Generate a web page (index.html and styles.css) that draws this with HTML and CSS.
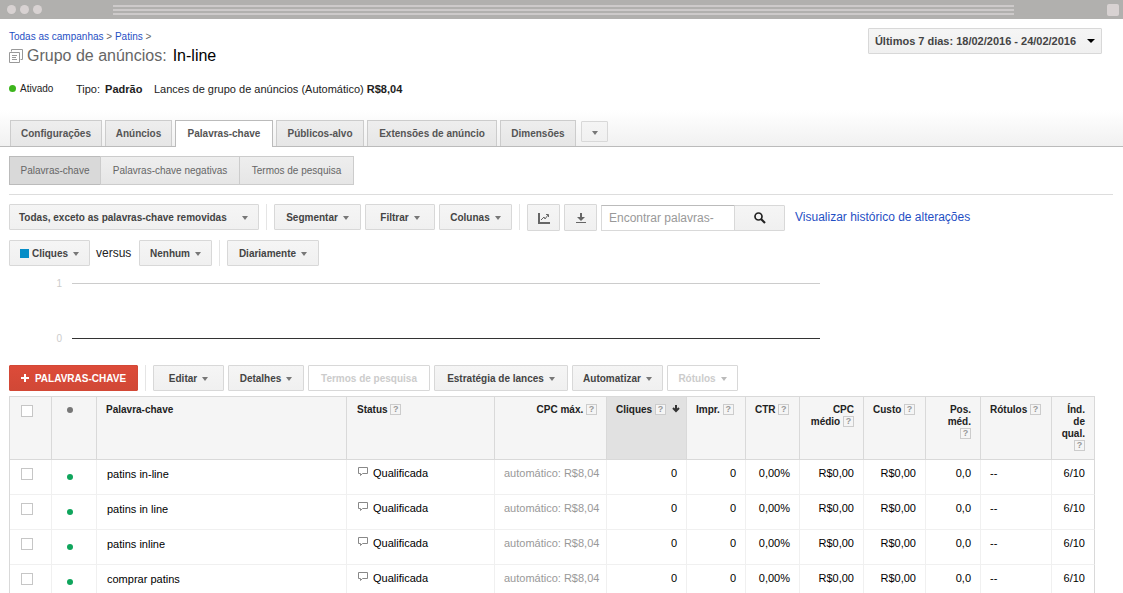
FILE: index.html
```html
<!DOCTYPE html>
<html lang="pt-BR">
<head>
    <meta charset="UTF-8">
    <meta name="viewport" content="width=device-width, initial-scale=1.0">
    <title>Grupo de anúncios: In-line</title>
    <link rel="stylesheet" href="styles.css">
</head>
<body>
    <div class="window-bar">
        <div class="window-dots"><i></i><i></i><i></i></div>
        <div class="window-lines"><i></i><i></i><i></i></div>
        <div class="window-box"></div>
    </div>

    <main class="content">
        <header class="page-header">
            <div>
                <nav class="breadcrumb"><a href="#">Todas as campanhas</a> &gt; <a href="#">Patins</a> &gt;</nav>
                <h1>
                    <svg width="14" height="14" viewBox="0 0 14 14" fill="none" stroke="#999">
                        <path d="M2.5 2.5V.5h11v10h-2M.5 3.5h10v10H.5z"/>
                        <path d="M3 6.5h5M3 8.5h4M3 10.5h5"/>
                    </svg>
                    <span>Grupo de anúncios:</span> <b>In-line</b>
                </h1>
                <div class="group-info">
                    <span class="dot enabled"></span>
                    <span class="state">Ativado</span>
                    <span class="type">Tipo: <strong>Padrão</strong></span>
                    <span>Lances de grupo de anúncios (Automático) <strong>R$8,04</strong></span>
                </div>
            </div>
            <button class="btn date-btn">Últimos 7 dias: 18/02/2016 - 24/02/2016 <i class="caret"></i></button>
        </header>

        <nav class="tabs">
            <a href="#" class="tab w-92">Configurações</a>
            <a href="#" class="tab w-67">Anúncios</a>
            <a href="#" class="tab w-98 active">Palavras-chave</a>
            <a href="#" class="tab w-88">Públicos-alvo</a>
            <a href="#" class="tab w-130">Extensões de anúncio</a>
            <a href="#" class="tab w-76">Dimensões</a>
            <button class="btn more-tabs" aria-label="Mais guias"><i class="caret"></i></button>
        </nav>

        <nav class="subtabs">
            <a href="#" class="w-92 active">Palavras-chave</a>
            <a href="#" class="w-140">Palavras-chave negativas</a>
            <a href="#" class="w-115">Termos de pesquisa</a>
        </nav>

        <div class="toolbar filters">
            <button class="btn filter-all">Todas, exceto as palavras-chave removidas <i class="caret"></i></button>
            <span class="divider"></span>
            <button class="btn w-87">Segmentar <i class="caret"></i></button>
            <button class="btn w-70">Filtrar <i class="caret"></i></button>
            <button class="btn w-73">Colunas <i class="caret"></i></button>
            <span class="divider"></span>
            <button class="btn icon-btn" aria-label="Gráfico">
                <svg width="12" height="12" viewBox="0 0 12 12" fill="none" stroke="#666">
                    <path d="M1 1v10h11" stroke-width="2"/>
                    <path d="M3 8l3-3 1 2 3-4M8 2.5h2.500V5"/>
                </svg>
            </button>
            <button class="btn icon-btn" aria-label="Download">
                <svg width="10" height="12" viewBox="0 0 10 12" fill="#666">
                    <path d="M4 1h2v4h3L5 9 1 5h3zM0 10h10v1H0z"/>
                </svg>
            </button>
            <form class="search">
                <input type="text" placeholder="Encontrar palavras-" aria-label="Encontrar palavras-chave">
                <button class="btn search-btn" type="button" aria-label="Pesquisar">
                    <svg width="12" height="12" viewBox="0 0 12 12" fill="none" stroke="#222">
                        <circle cx="4.5" cy="4.5" r="3.5" stroke-width="1.7"/>
                        <path d="M7 7l4 4" stroke-width="2.2"/>
                    </svg>
                </button>
            </form>
            <a href="#" class="history-link">Visualizar histórico de alterações</a>
        </div>

        <div class="toolbar metrics">
            <button class="btn w-81"><i class="swatch"></i>Cliques <i class="caret"></i></button>
            <span class="versus">versus</span>
            <button class="btn w-73">Nenhum <i class="caret"></i></button>
            <span class="divider"></span>
            <button class="btn w-92">Diariamente <i class="caret"></i></button>
        </div>

        <div class="chart">
            <div class="grid-line"><span>1</span><i></i></div>
            <div class="grid-line base"><span>0</span><i></i></div>
        </div>

        <div class="toolbar actions">
            <button class="btn primary w-129">
                <svg width="8" height="8" viewBox="0 0 8 8" fill="#fff"><path d="M3 0h2v3h3v2H5v3H3V5H0V3h3z"/></svg>
                PALAVRAS-CHAVE
            </button>
            <span class="divider"></span>
            <button class="btn w-71">Editar <i class="caret"></i></button>
            <button class="btn w-76">Detalhes <i class="caret"></i></button>
            <button class="btn w-122" disabled>Termos de pesquisa</button>
            <button class="btn w-134">Estratégia de lances <i class="caret"></i></button>
            <button class="btn w-91">Automatizar <i class="caret"></i></button>
            <button class="btn w-71" disabled>Rótulos <i class="caret"></i></button>
        </div>

        <div class="table-wrap">
            <table>
                <colgroup>
                    <col class="w-42"><col class="w-45"><col><col class="w-148"><col class="w-112">
                    <col class="w-80"><col class="w-59"><col class="w-54"><col class="w-64"><col class="w-62">
                    <col class="w-55"><col class="w-71"><col class="w-43">
                </colgroup>
                <thead>
                    <tr>
                        <th class="check"><input type="checkbox" aria-label="Selecionar tudo"></th>
                        <th class="mark"><span class="dot"></span></th>
                        <th>Palavra-chave</th>
                        <th class="status">Status <button class="help">?</button></th>
                        <th class="num">CPC máx. <button class="help">?</button></th>
                        <th class="sorted">Cliques <button class="help">?</button>
                            <svg width="8" height="8" viewBox="0 0 8 8" fill="none" stroke="#333" stroke-width="2"><path d="M4 0v6M1 3l3 3 3-3"/></svg>
                        </th>
                        <th>Impr. <button class="help">?</button></th>
                        <th>CTR <button class="help">?</button></th>
                        <th class="num">CPC<br>médio <button class="help">?</button></th>
                        <th>Custo <button class="help">?</button></th>
                        <th class="num">Pos.<br>méd.<br><button class="help">?</button></th>
                        <th>Rótulos <button class="help">?</button></th>
                        <th class="num">Índ.<br>de<br>qual.<br><button class="help">?</button></th>
                    </tr>
                </thead>
                <tbody>
                    <tr>
                        <td class="check"><input type="checkbox" aria-label="patins in-line"></td>
                        <td class="mark"><span class="dot"></span></td>
                        <td class="keyword">patins in-line</td>
                        <td class="status"><svg width="11" height="10" viewBox="0 0 11 10" fill="none" stroke="#888"><path d="M.5.5h9v6h-5l-2 2v-2h-2z"/></svg>Qualificada</td>
                        <td class="num auto">automático: R$8,04</td>
                        <td class="num">0</td>
                        <td class="num">0</td>
                        <td class="num">0,00%</td>
                        <td class="num">R$0,00</td>
                        <td class="num">R$0,00</td>
                        <td class="num">0,0</td>
                        <td>--</td>
                        <td class="num">6/10</td>
                    </tr>
                    <tr>
                        <td class="check"><input type="checkbox" aria-label="patins in line"></td>
                        <td class="mark"><span class="dot"></span></td>
                        <td class="keyword">patins in line</td>
                        <td class="status"><svg width="11" height="10" viewBox="0 0 11 10" fill="none" stroke="#888"><path d="M.5.5h9v6h-5l-2 2v-2h-2z"/></svg>Qualificada</td>
                        <td class="num auto">automático: R$8,04</td>
                        <td class="num">0</td>
                        <td class="num">0</td>
                        <td class="num">0,00%</td>
                        <td class="num">R$0,00</td>
                        <td class="num">R$0,00</td>
                        <td class="num">0,0</td>
                        <td>--</td>
                        <td class="num">6/10</td>
                    </tr>
                    <tr>
                        <td class="check"><input type="checkbox" aria-label="patins inline"></td>
                        <td class="mark"><span class="dot"></span></td>
                        <td class="keyword">patins inline</td>
                        <td class="status"><svg width="11" height="10" viewBox="0 0 11 10" fill="none" stroke="#888"><path d="M.5.5h9v6h-5l-2 2v-2h-2z"/></svg>Qualificada</td>
                        <td class="num auto">automático: R$8,04</td>
                        <td class="num">0</td>
                        <td class="num">0</td>
                        <td class="num">0,00%</td>
                        <td class="num">R$0,00</td>
                        <td class="num">R$0,00</td>
                        <td class="num">0,0</td>
                        <td>--</td>
                        <td class="num">6/10</td>
                    </tr>
                    <tr>
                        <td class="check"><input type="checkbox" aria-label="comprar patins"></td>
                        <td class="mark"><span class="dot"></span></td>
                        <td class="keyword">comprar patins</td>
                        <td class="status"><svg width="11" height="10" viewBox="0 0 11 10" fill="none" stroke="#888"><path d="M.5.5h9v6h-5l-2 2v-2h-2z"/></svg>Qualificada</td>
                        <td class="num auto">automático: R$8,04</td>
                        <td class="num">0</td>
                        <td class="num">0</td>
                        <td class="num">0,00%</td>
                        <td class="num">R$0,00</td>
                        <td class="num">R$0,00</td>
                        <td class="num">0,0</td>
                        <td>--</td>
                        <td class="num">6/10</td>
                    </tr>
                </tbody>
            </table>
        </div>
    </main>
</body>
</html>
```
FILE: styles.css
```css
* {
    box-sizing: border-box;
}

body {
    margin: 0;
    height: 100vh;
    display: flex;
    flex-direction: column;
    font-family: Arial, "Liberation Sans", sans-serif;
    font-size: 11px;
    color: #222;
    background: #fff;
}

a {
    color: #1f4fc4;
    text-decoration: none;
}

button,
input {
    font-family: inherit;
    margin: 0;
}

/* window frame */
.window-bar {
    flex: none;
    display: flex;
    align-items: center;
    height: 19px;
    padding: 0 4px 0 7px;
    background: #b1b0ae;
}

.window-dots {
    display: flex;
    gap: 4px;
    width: 106px;
}

.window-dots i {
    width: 9px;
    height: 9px;
    border-radius: 50%;
    background: #d8d2d2;
}

.window-lines {
    flex: 1;
    display: flex;
    flex-direction: column;
    gap: 2px;
    margin-right: 93px;
}

.window-lines i {
    height: 2px;
    background: #cdcaca;
}

.window-box {
    width: 12px;
    height: 12px;
    border-radius: 2px;
    background: #d8d2d2;
}

.content {
    flex: 1;
    min-height: 0;
    overflow-y: auto;
    scrollbar-width: none;
}

/* header */
.page-header {
    display: flex;
    justify-content: space-between;
    align-items: flex-start;
    height: 91px;
    padding: 9px 21px 0 9px;
}

.breadcrumb {
    padding-top: 2px;
    font-size: 10px;
    line-height: 14px;
    color: #666;
}

h1 {
    display: flex;
    align-items: center;
    gap: 4px;
    margin: 2px 0 0;
    font-size: 16px;
    font-weight: normal;
    line-height: 20px;
    color: #666;
}

h1 b {
    margin-left: 2px;
    font-weight: normal;
    color: #000;
}

.group-info {
    display: flex;
    align-items: center;
    margin-top: 16px;
    line-height: 14px;
}

.group-info .state {
    width: 56px;
    font-size: 10px;
}

.group-info .type {
    width: 78px;
}

.type strong {
    margin-left: 2px;
}

.dot {
    display: inline-block;
    width: 6px;
    height: 6px;
    border-radius: 50%;
    background: #777;
}

.dot.enabled {
    width: 7px;
    height: 7px;
    margin: 0 4px 2px 0;
    background: #3db51d;
}

/* buttons */
.btn {
    display: flex;
    flex: none;
    align-items: center;
    justify-content: center;
    height: 26px;
    padding: 0;
    border: 1px solid #d8d8d8;
    border-radius: 1px;
    background: linear-gradient(#f5f5f5, #f0f0f0);
    color: #444;
    font-size: 10px;
    font-weight: bold;
    white-space: nowrap;
    cursor: pointer;
}

.btn:disabled {
    background: #fff;
    color: #ccc;
    cursor: default;
}

.btn:disabled .caret {
    border-top-color: #bbb;
}

.caret {
    margin: 2px 0 0 5px;
    border: 3px solid transparent;
    border-top: 4px solid #777;
    border-bottom: 0;
}

.date-btn {
    width: 234px;
    font-size: 11px;
}

.date-btn .caret {
    margin: 0 0 0 11px;
    border-width: 4px 4px 0;
    border-top-color: #000;
}

.filter-all {
    justify-content: space-between;
    width: 250px;
    padding: 0 10px 0 9px;
}

.primary {
    gap: 6px;
    border-color: #d34836;
    background: linear-gradient(#dd4b39, #d14836);
    color: #fff;
}

.divider {
    flex: none;
    width: 1px;
    height: 26px;
    margin: 0 3px;
    background: #e5e5e5;
}

/* tabs */
.tabs {
    display: flex;
    align-items: flex-end;
    gap: 3px;
    height: 37px;
    padding-left: 10px;
    border-bottom: 1px solid #bbb;
    background: linear-gradient(#fff, #f1f1f1);
}

.tab {
    height: 26px;
    border: 1px solid #ccc;
    border-bottom: 0;
    background: linear-gradient(#eee, #e6e6e6);
    color: #555;
    font-size: 10px;
    font-weight: bold;
    line-height: 26px;
    text-align: center;
}

.tab.active {
    height: 27px;
    margin-bottom: -1px;
    border-color: #bbb;
    background: #fff;
}

.more-tabs {
    width: 27px;
    height: 21px;
    margin: 0 0 4px 2px;
}

.more-tabs .caret {
    margin-left: 0;
}

.subtabs {
    display: flex;
    margin: 9px 10px 0 9px;
    padding-bottom: 9px;
    border-bottom: 1px solid #ddd;
}

.subtabs a {
    height: 29px;
    border: 1px solid #ccc;
    background: linear-gradient(#eee, #e6e6e6);
    color: #666;
    font-size: 10px;
    line-height: 27px;
    text-align: center;
}

.subtabs a + a {
    margin-left: -1px;
}

.subtabs .active {
    background: #d9d9d9;
    border-color: #bbb;
}

/* toolbars */
.toolbar {
    display: flex;
    align-items: flex-start;
    gap: 4px;
    padding-left: 9px;
}

.filters,
.metrics {
    margin-top: 9px;
}

.actions {
    margin-top: 19px;
}

.icon-btn {
    width: 33px;
    height: 27px;
}

.search {
    display: flex;
    padding-top: 1px;
}

.search input {
    width: 134px;
    height: 26px;
    padding: 0 7px;
    border: 1px solid #d9d9d9;
    border-top-color: #bbb;
    border-radius: 0;
    font-size: 12px;
}

.search input::placeholder {
    color: #999;
}

.search-btn {
    width: 51px;
    margin-left: -1px;
}

.history-link {
    margin-left: 6px;
    font-size: 12px;
    line-height: 26px;
}

.swatch {
    width: 9px;
    height: 9px;
    margin-right: 3px;
    background: #058dc7;
}

.versus {
    width: 41px;
    padding-left: 2px;
    font-size: 12px;
    line-height: 26px;
}

/* chart */
.chart {
    max-width: 811px;
    margin: 10px 0 0 9px;
}

.grid-line {
    display: flex;
    align-items: center;
    gap: 10px;
    height: 15px;
    font-size: 10px;
    color: #ccc;
}

.grid-line span {
    width: 53px;
    text-align: right;
}

.grid-line i {
    flex: 1;
    height: 1px;
    background: #ccc;
}

.grid-line.base {
    margin-top: 40px;
}

.base i {
    background: #333;
}

/* keyword table */
.table-wrap {
    margin: 5px 28px 0 9px;
}

table {
    width: 100%;
    table-layout: fixed;
    border-collapse: separate;
    border-spacing: 0;
    border: 1px solid #d9d9d9;
    border-width: 1px 0 0 1px;
}

th,
td {
    padding: 6px 9px 0;
    vertical-align: top;
    text-align: left;
    white-space: nowrap;
}

th {
    height: 63px;
    padding-top: 7px;
    border-right: 1px solid #d9d9d9;
    border-bottom: 1px solid #d9d9d9;
    background: #f5f5f5;
    font-size: 10px;
    line-height: 12px;
}

td {
    height: 35px;
    border-right: 1px solid #f0f0f0;
    border-bottom: 1px solid #f0f0f0;
    color: #000;
    line-height: 14px;
}

td:last-child {
    border-right-color: #d9d9d9;
}

.num {
    text-align: right;
}

.sorted {
    background: #e1e1e1;
    padding-right: 4px;
}

.sorted svg {
    margin-left: 3px;
}

td.keyword {
    padding: 7px 10px 0;
}

td.auto {
    color: #999;
}

.status {
    padding-left: 10px;
}

.status svg {
    margin: 0 4px 0 1px;
}

.check {
    padding: 8px 0 0 11px;
}

.check input {
    display: block;
    appearance: none;
    width: 12px;
    height: 12px;
    border: 1px solid #c6c6c6;
    background: #fff;
}

.check input:checked {
    background: #777;
}

.mark {
    padding-left: 15px;
}

td.mark {
    padding-top: 14px;
    line-height: 0;
}

td .dot {
    background: #0fa55c;
}

.help {
    width: 11px;
    height: 11px;
    padding: 0;
    border: 1px solid #ccc;
    background: #f5f5f5;
    color: #999;
    font-size: 9px;
    font-weight: bold;
    line-height: 9px;
    vertical-align: top;
}

/* control and column widths */
.w-42 { width: 42px; }
.w-43 { width: 43px; }
.w-45 { width: 45px; }
.w-54 { width: 54px; }
.w-55 { width: 55px; }
.w-59 { width: 59px; }
.w-62 { width: 62px; }
.w-64 { width: 64px; }
.w-67 { width: 67px; }
.w-70 { width: 70px; }
.w-71 { width: 71px; }
.w-73 { width: 73px; }
.w-76 { width: 76px; }
.w-80 { width: 80px; }
.w-81 { width: 81px; }
.w-87 { width: 87px; }
.w-88 { width: 88px; }
.w-91 { width: 91px; }
.w-92 { width: 92px; }
.w-98 { width: 98px; }
.w-112 { width: 112px; }
.w-115 { width: 115px; }
.w-122 { width: 122px; }
.w-129 { width: 129px; }
.w-130 { width: 130px; }
.w-134 { width: 134px; }
.w-140 { width: 140px; }
.w-148 { width: 148px; }
```
